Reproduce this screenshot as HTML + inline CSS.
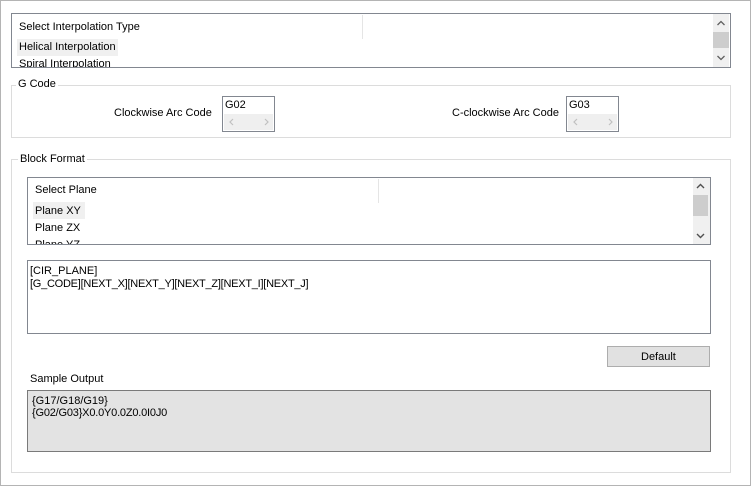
<!DOCTYPE html>
<html><head><style>
*{box-sizing:border-box;margin:0;padding:0}
body{width:752px;height:486px;background:#fff;position:relative;overflow:hidden;font-family:"Liberation Sans",sans-serif;font-size:11px;color:#000}
.a{position:absolute}
.frame{left:0;top:0;width:751px;height:486px;border:1px solid #b4b4b4}
.lb{border:1px solid #828790;background:#fff}
.grp{border:1px solid #dcdcdc}
.lbl{background:#fff;padding:0 2px}
.sb{background:#f0f0f0}
.thumb{background:#cdcdcd}
.t{white-space:nowrap}
.spin{border:1px solid #828790;background:#fff}
</style></head><body>
<div class="a frame"></div>

<div class="a lb" style="left:11px;top:13px;width:720px;height:55px"></div>
<div class="a" style="left:362px;top:15px;width:1px;height:24px;background:#e5e5e5"></div>
<div class="a t" style="left:19px;top:21px">Select Interpolation Type</div>
<div class="a" style="left:17px;top:39px;width:101px;height:17px;background:#f0f0f0"></div>
<div class="a t" style="left:19px;top:41px">Helical Interpolation</div>
<div class="a" style="left:13px;top:56px;width:699px;height:11px;overflow:hidden"><div class="t" style="position:absolute;left:6px;top:2px">Spiral Interpolation</div></div>
<div class="a sb" style="left:713px;top:14px;width:16px;height:53px"></div>
<div class="a thumb" style="left:713px;top:32px;width:16px;height:16px"></div>
<svg class="a" style="left:713px;top:14px" width="16" height="53"><path d="M4.5 11 L8 7.5 L11.5 11" fill="none" stroke="#606060" stroke-width="1.3"/><path d="M4.5 42 L8 45.5 L11.5 42" fill="none" stroke="#606060" stroke-width="1.3"/></svg>

<div class="a grp" style="left:11px;top:85px;width:720px;height:53px"></div>
<div class="a lbl t" style="left:16px;top:78px">G Code</div>
<div class="a t" style="left:114px;top:107px">Clockwise Arc Code</div>
<div class="a spin" style="left:222px;top:96px;width:53px;height:36px"></div>
<div class="a t" style="left:225px;top:99px">G02</div>
<div class="a" style="left:224px;top:114px;width:49px;height:16px;background:#efefef"></div>
<svg class="a" style="left:224px;top:114px" width="49" height="16"><path d="M9 5 L6 8 L9 11 M41 5 L44 8 L41 11" fill="none" stroke="#c0c0c0" stroke-width="1.2"/></svg>
<div class="a t" style="left:452px;top:107px">C-clockwise Arc Code</div>
<div class="a spin" style="left:566px;top:96px;width:53px;height:36px"></div>
<div class="a t" style="left:569px;top:99px">G03</div>
<div class="a" style="left:568px;top:114px;width:49px;height:16px;background:#efefef"></div>
<svg class="a" style="left:568px;top:114px" width="49" height="16"><path d="M9 5 L6 8 L9 11 M41 5 L44 8 L41 11" fill="none" stroke="#c0c0c0" stroke-width="1.2"/></svg>

<div class="a grp" style="left:11px;top:159px;width:720px;height:314px"></div>
<div class="a lbl t" style="left:18px;top:153px">Block Format</div>

<div class="a lb" style="left:27px;top:177px;width:684px;height:68px"></div>
<div class="a" style="left:378px;top:179px;width:1px;height:24px;background:#e5e5e5"></div>
<div class="a t" style="left:35px;top:184px">Select Plane</div>
<div class="a" style="left:33px;top:202px;width:52px;height:17px;background:#f0f0f0"></div>
<div class="a t" style="left:35px;top:205px">Plane XY</div>
<div class="a t" style="left:35px;top:222px">Plane ZX</div>
<div class="a" style="left:28px;top:237px;width:664px;height:7px;overflow:hidden"><div class="t" style="position:absolute;left:7px;top:2px">Plane YZ</div></div>
<div class="a sb" style="left:693px;top:178px;width:17px;height:66px"></div>
<div class="a thumb" style="left:693px;top:195px;width:15px;height:21px"></div>
<svg class="a" style="left:693px;top:178px" width="17" height="66"><path d="M4 10 L7.5 6.5 L11 10" fill="none" stroke="#505050" stroke-width="1.4"/><path d="M4 56 L7.5 59.5 L11 56" fill="none" stroke="#505050" stroke-width="1.4"/></svg>

<div class="a lb" style="left:27px;top:260px;width:684px;height:74px"></div>
<div class="a t" style="left:30px;top:265px">[CIR_PLANE]</div>
<div class="a t" style="left:30px;top:278px;letter-spacing:-0.25px">[G_CODE][NEXT_X][NEXT_Y][NEXT_Z][NEXT_I][NEXT_J]</div>

<div class="a" style="left:607px;top:346px;width:103px;height:21px;background:#e1e1e1;border:1px solid #adadad"></div>
<div class="a t" style="left:641px;top:351px">Default</div>

<div class="a t" style="left:30px;top:373px">Sample Output</div>
<div class="a" style="left:27px;top:390px;width:684px;height:62px;background:#e3e3e3;border:1px solid #7a7a7a"></div>
<div class="a t" style="left:32px;top:395px">{G17/G18/G19}</div>
<div class="a t" style="left:32px;top:407px;letter-spacing:-0.2px">{G02/G03}X0.0Y0.0Z0.0I0J0</div>
</body></html>
